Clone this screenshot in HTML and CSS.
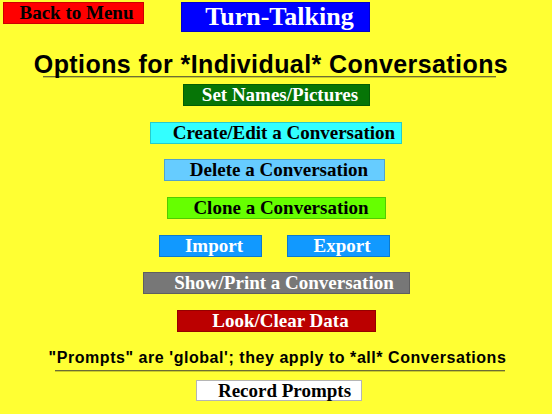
FILE: index.html
```html
<!DOCTYPE html>
<html lang="en">
<head>
	<meta charset="UTF-8">
	<title>Turn-Talking</title>
	<link rel="stylesheet" href="styles.css">
</head>
<body>
	<div class="topbar">
		<div class="btn back">Back to Menu</div>
		<div class="btn title">Turn-Talking</div>
	</div>

	<h1 class="heading">Options for *Individual* Conversations</h1>
	<div class="rule rule-top"></div>

	<div class="menu">
		<div class="btn names">Set Names/Pictures</div>
		<div class="btn create">Create/Edit a Conversation</div>
		<div class="btn delete">Delete a Conversation</div>
		<div class="btn clone">Clone a Conversation</div>
		<div class="pair">
			<div class="btn port">Import</div>
			<div class="btn port">Export</div>
		</div>
		<div class="btn show">Show/Print a Conversation</div>
		<div class="btn look">Look/Clear Data</div>
	</div>

	<p class="note">"Prompts" are 'global'; they apply to *all* Conversations</p>
	<div class="rule rule-bottom"></div>

	<div class="menu">
		<div class="btn record">Record Prompts</div>
	</div>
</body>
</html>
```

FILE: styles.css
```css
*{padding: 0;margin: 0;box-sizing: border-box;}
body{
	background: #ffff33;
	font-family: "Liberation Serif", "Times New Roman", serif;
	padding-top: 2px;
}

.topbar{
	display: grid;
	grid-template-columns: 1fr auto 1fr;
	align-items: start;
	padding: 0 3px;
}

.btn{
	height: 22px;
	line-height: 20px;
	font-size: 19px;
	font-weight: bold;
	text-align: center;
	color: #fff;
	border: 1px solid rgba(0,0,0,0.2);
	white-space: nowrap;
	padding-left: 9px;
}

.back{
	justify-self: start;
	width: 141px;
	background: #ff0000;
	color: #000;
	padding-left: 6px;
}
.title{
	width: 189px;
	height: 30px;
	line-height: 28px;
	font-size: 26px;
	background: #0000ff;
	padding-left: 9px;
	margin-left: -2px;
}

.heading{
	margin-top: 20px;
	font-family: "Liberation Sans", Arial, sans-serif;
	font-size: 25px;
	letter-spacing: 0.42px;
	line-height: 24px;
	text-align: center;
	color: #000;
	padding-right: 10px;
}

.rule{
	height: 2px;
	border-top: 1px solid #6d6d35;
	border-bottom: 1px solid #caca2c;
}
.rule-top{
	width: 453px;
	margin-left: 43px;
}
.rule-bottom{
	width: 450px;
	margin-left: 55px;
	margin-top: 3px;
}

.menu{
	display: flex;
	flex-direction: column;
	align-items: center;
	gap: 15.7px;
}
.rule-top + .menu{margin-top: 6px;}

.names{width: 187px;background: #067506;padding-left: 8px;}
.create{width: 252px;background: #33ffff;color: #000;padding-left: 16px;}
.delete{width: 221px;background: #66ccff;color: #000;margin-right: 3px;}
.clone{width: 219px;background: #66ff00;color: #000;padding-left: 10px;}

.pair{
	display: flex;
	gap: 25px;
	margin-right: 3px;
}
.port{width: 103px;background: #1199ff;padding-left: 7px;}

.show{width: 267px;background: #777777;padding-left: 16px;}
.look{width: 199px;background: #bb0000;}

.note{
	margin-top: 17px;
	font-family: "Liberation Sans", Arial, sans-serif;
	font-size: 16px;
	letter-spacing: 0.55px;
	font-weight: bold;
	line-height: 18px;
	text-align: center;
	padding-left: 3px;
}

.rule-bottom + .menu{margin-top: 8px;}
.record{
	width: 166px;
	height: 21px;
	line-height: 19px;
	background: #fff;
	color: #000;
	border-color: #b5b5b5;
	padding-left: 11px;
	margin-left: 6px;
}
```
